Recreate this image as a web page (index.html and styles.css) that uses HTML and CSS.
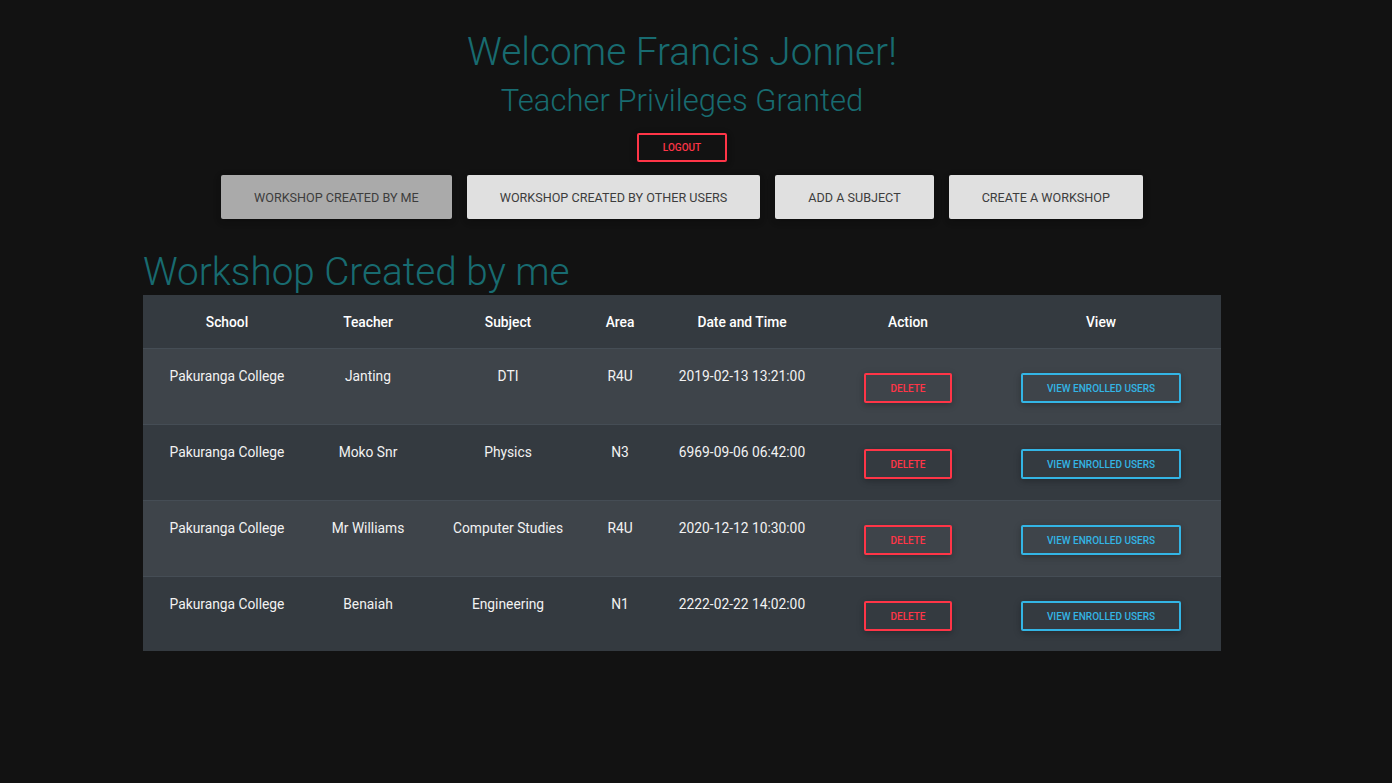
FILE: index.html
```html
<!DOCTYPE html>
<html lang="en">
<head>
<meta charset="utf-8">
<title>Workshops</title>
<link rel="stylesheet" href="styles.css">
</head>
<body>
<main class="page">
  <header class="intro">
    <h1 class="welcome">Welcome Francis Jonner!</h1>
    <h2 class="privileges">Teacher Privileges Granted</h2>
    <button class="btn-outline btn-logout">LOGOUT</button>
    <nav class="tabs">
      <button class="tab tab-active">WORKSHOP CREATED BY ME</button>
      <button class="tab">WORKSHOP CREATED BY OTHER USERS</button>
      <button class="tab">ADD A SUBJECT</button>
      <button class="tab">CREATE A WORKSHOP</button>
    </nav>
  </header>
  <h2 class="section-title">Workshop Created by me</h2>
  <table class="workshops">
    <colgroup>
      <col class="c-school"><col class="c-teacher"><col class="c-subject"><col class="c-area"><col class="c-date"><col class="c-action"><col class="c-view">
    </colgroup>
    <thead>
      <tr><th>School</th><th>Teacher</th><th>Subject</th><th>Area</th><th>Date and Time</th><th>Action</th><th>View</th></tr>
    </thead>
    <tbody>
      <tr class="odd">
        <td>Pakuranga College</td><td>Janting</td><td>DTI</td><td>R4U</td><td>2019-02-13 13:21:00</td>
        <td><button class="btn-outline btn-delete">DELETE</button></td>
        <td><button class="btn-outline btn-view">VIEW ENROLLED USERS</button></td>
      </tr>
      <tr>
        <td>Pakuranga College</td><td>Moko Snr</td><td>Physics</td><td>N3</td><td>6969-09-06 06:42:00</td>
        <td><button class="btn-outline btn-delete">DELETE</button></td>
        <td><button class="btn-outline btn-view">VIEW ENROLLED USERS</button></td>
      </tr>
      <tr class="odd">
        <td>Pakuranga College</td><td>Mr Williams</td><td>Computer Studies</td><td>R4U</td><td>2020-12-12 10:30:00</td>
        <td><button class="btn-outline btn-delete">DELETE</button></td>
        <td><button class="btn-outline btn-view">VIEW ENROLLED USERS</button></td>
      </tr>
      <tr>
        <td>Pakuranga College</td><td>Benaiah</td><td>Engineering</td><td>N1</td><td>2222-02-22 14:02:00</td>
        <td><button class="btn-outline btn-delete">DELETE</button></td>
        <td><button class="btn-outline btn-view">VIEW ENROLLED USERS</button></td>
      </tr>
    </tbody>
  </table>
</main>
</body>
</html>
```

FILE: styles.css
```css
* { box-sizing: border-box; }
html, body {
  margin: 0;
  background: #121212;
  font-family: Roboto, "Liberation Sans", sans-serif;
  color: #fff;
}
.page {
  width: 1078px;
  margin-left: 143px;
  padding-top: 28px;
}
.intro {
  display: flex;
  flex-direction: column;
  align-items: center;
}
.welcome {
  margin: 0;
  font-size: 38.8px;
  line-height: 48px;
  font-weight: 300;
  color: #186b70;
}
.privileges {
  margin: 7px 0 0;
  font-size: 31px;
  line-height: 36px;
  font-weight: 300;
  color: #186b70;
}
.btn-outline {
  font-family: Roboto, "Liberation Sans", sans-serif;
  background: transparent;
  border: 2px solid;
  border-radius: 2px;
  font-size: 10px;
  line-height: 15px;
  font-weight: 500;
  cursor: pointer;
  box-shadow: 0 2px 5px 0 rgba(0,0,0,.16), 0 2px 10px 0 rgba(0,0,0,.12);
}
.btn-logout {
  margin-top: 14px;
  width: 90px;
  height: 29px;
  padding: 0;
  color: #ff3547;
  border-color: #ff3547;
}
.tabs {
  display: flex;
  gap: 15px;
  margin-top: 13px;
}
.tab {
  font-family: Roboto, "Liberation Sans", sans-serif;
  height: 44px;
  padding: 0 33px;
  border: none;
  border-radius: 2px;
  background: #e0e0e0;
  color: #3d3d3d;
  font-size: 12.6px;
  font-weight: 400;
  box-shadow: 0 2px 5px 0 rgba(0,0,0,.16), 0 2px 10px 0 rgba(0,0,0,.12);
  cursor: pointer;
}
.tab-active { background: #aaaaaa; }
.section-title {
  margin: 29px 0 0;
  font-size: 38.7px;
  line-height: 47px;
  font-weight: 300;
  color: #186b70;
}
.workshops {
  width: 1078px;
  table-layout: fixed;
  border-collapse: collapse;
  background: #343a40;
  font-size: 13.8px;
  line-height: 21px;
}
.c-school { width: 168px; }
.c-teacher { width: 114px; }
.c-subject { width: 166px; }
.c-area { width: 58px; }
.c-date { width: 186px; }
.c-action { width: 146px; }
.c-view { width: 240px; }
.workshops th {
  padding: 17px 4px 15px;
  font-weight: 500;
  text-align: center;
  border-bottom: 1px solid #454d55;
}
.workshops td {
  padding: 17px 4px 16px;
  text-align: center;
  vertical-align: top;
  border-top: 1px solid #454d55;
  color: #f2f2f2;
}
.workshops tbody tr:first-child td { border-top: none; }
.workshops tbody tr:last-child td { padding-bottom: 15px; }
.workshops tr.odd { background: #3e444a; }
.btn-delete {
  margin: 7px 0 5px;
  width: 88px;
  height: 30px;
  padding: 0;
  color: #ff3547;
  border-color: #ff3547;
  vertical-align: top;
}
.btn-view {
  margin: 7px 0 5px;
  width: 160px;
  height: 30px;
  padding: 0;
  color: #33b5e5;
  border-color: #33b5e5;
  vertical-align: top;
}
```
